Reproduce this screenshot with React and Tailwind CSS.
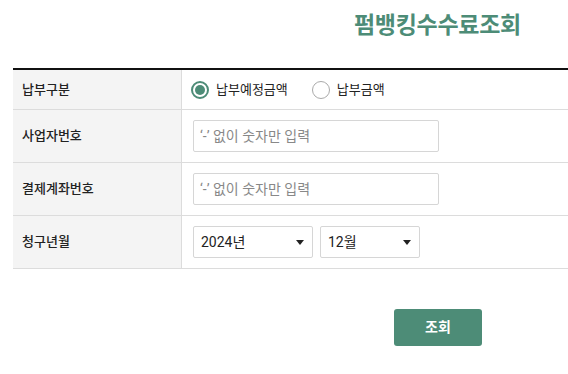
import React, { useState } from 'react';

const Radio = ({ checked, label, onClick }) => (
  <label className="flex items-center gap-[7px] cursor-pointer" onClick={onClick}>
    <span
      className={`flex h-[18px] w-[18px] items-center justify-center rounded-full border ${
        checked ? 'border-[#4d8c77] border-2' : 'border-[#aaaaaa]'
      }`}
    >
      {checked && <span className="h-[10px] w-[10px] rounded-full bg-[#4d8c77]" />}
    </span>
    <span className="text-[13px] text-[#222222]">{label}</span>
  </label>
);

const Select = ({ value, width }) => (
  <div
    className={`flex h-[32px] items-center justify-between rounded-[2px] border border-[#d6d6d6] bg-white pl-[7px] pr-[8px] ${width}`}
  >
    <span className="text-[14px] text-[#222222]">{value}</span>
    <svg width="8" height="5" viewBox="0 0 8 5">
      <path d="M0 0h8L4 5z" fill="#222" />
    </svg>
  </div>
);

const Row = ({ label, height, children }) => (
  <div className={`flex border-b border-[#dcdcdc] ${height}`}>
    <div className="flex w-[169px] shrink-0 items-center border-r border-[#dcdcdc] bg-[#f4f4f4] pl-[9px] text-[13px] font-medium text-[#222222]">
      {label}
    </div>
    <div className="flex flex-1 items-center pl-[11px]">{children}</div>
  </div>
);

const App = () => {
  const [kind, setKind] = useState('plan');

  return (
    <div className="min-h-[374px] w-full bg-white font-['Roboto','Noto_Sans_CJK_KR',sans-serif]">
      <div className="flex h-[49px] items-center pl-[354px] pt-[1px]">
        <h1 className="text-[23px] font-bold leading-none tracking-[-0.3px] text-[#4d8c77]">
          펌뱅킹수수료조회
        </h1>
      </div>

      <div className="ml-[13px] mt-[19px] border-t-2 border-[#111111]">
        <Row label="납부구분" height="h-[40px]">
          <div className="-ml-[2px] flex items-center gap-[24px]">
            <Radio checked={kind === 'plan'} label="납부예정금액" onClick={() => setKind('plan')} />
            <Radio checked={kind === 'paid'} label="납부금액" onClick={() => setKind('paid')} />
          </div>
        </Row>
        <Row label="사업자번호" height="h-[53px]">
          <input
            className="h-[32px] w-[246px] rounded-[2px] border border-[#d6d6d6] px-[6px] text-[14px] text-[#222] outline-none placeholder:text-[#888888]"
            placeholder="‘-’ 없이 숫자만 입력"
          />
        </Row>
        <Row label="결제계좌번호" height="h-[53px]">
          <input
            className="h-[32px] w-[246px] rounded-[2px] border border-[#d6d6d6] px-[6px] text-[14px] text-[#222] outline-none placeholder:text-[#888888]"
            placeholder="‘-’ 없이 숫자만 입력"
          />
        </Row>
        <Row label="청구년월" height="h-[53px]">
          <div className="flex gap-[7px]">
            <Select value="2024년" width="w-[120px]" />
            <Select value="12월" width="w-[100px]" />
          </div>
        </Row>
      </div>

      <div className="mt-[40px] flex pl-[394px]">
        <button className="h-[37px] w-[88px] rounded-[3px] bg-[#4d8c77] text-[14px] font-bold text-white">
          조회
        </button>
      </div>
    </div>
  );
};

export default App;
